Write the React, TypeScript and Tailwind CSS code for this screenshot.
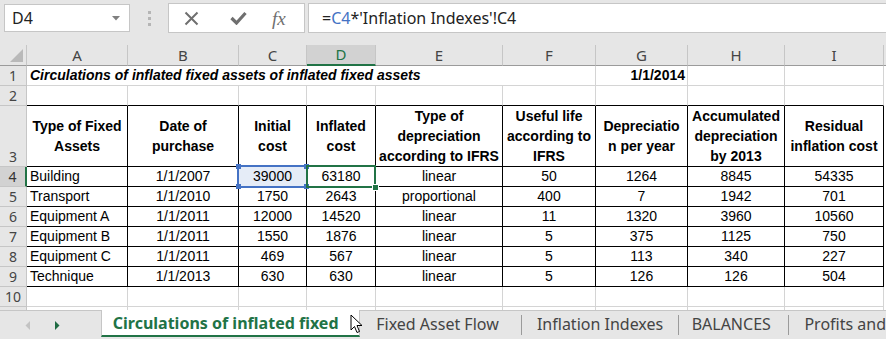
import React from 'react'

const cellFont = "font-['Liberation_Sans',Arial,sans-serif] text-[14px] text-black"
const uiFont = "font-['Noto_Sans','Open_Sans',sans-serif]"

const grid = 'border-r border-b border-[#d4d4d4] bg-white'
const boxed = 'border-r border-b border-black bg-white'
const aboveBox = 'border-r border-r-[#d4d4d4] border-b border-b-black bg-white'

const letters = ['A', 'B', 'C', 'D', 'E', 'F', 'G', 'H', 'I']

const headers: string[][] = [
  ['Type of Fixed', 'Assets'],
  ['Date of', 'purchase'],
  ['Initial', 'cost'],
  ['Inflated', 'cost'],
  ['Type of', 'depreciation', 'according to IFRS'],
  ['Useful life', 'according to', 'IFRS'],
  ['Depreciatio', 'n per year'],
  ['Accumulated', 'depreciation', 'by 2013'],
  ['Residual', 'inflation cost'],
]

const rows: string[][] = [
  ['Building', '1/1/2007', '39000', '63180', 'linear', '50', '1264', '8845', '54335'],
  ['Transport', '1/1/2010', '1750', '2643', 'proportional', '400', '7', '1942', '701'],
  ['Equipment A', '1/1/2011', '12000', '14520', 'linear', '11', '1320', '3960', '10560'],
  ['Equipment B', '1/1/2011', '1550', '1876', 'linear', '5', '375', '1125', '750'],
  ['Equipment C', '1/1/2011', '469', '567', 'linear', '5', '113', '340', '227'],
  ['Technique', '1/1/2013', '630', '630', 'linear', '5', '126', '126', '504'],
]

const RowHead = ({ n, active }: { n?: number; active?: boolean }) => (
  <div
    className={
      active
        ? `${uiFont} flex items-end justify-center bg-[#d2d2d2] border-b border-b-[#c6c6c6] border-r-2 border-r-[#217346] text-[14px] leading-[19px] text-[#333]`
        : `${uiFont} flex items-end justify-center bg-[#e6e6e6] border-b border-b-[#c6c6c6] border-r border-r-[#c6c6c6] text-[14px] leading-[19px] text-[#444]`
    }
  >
    {n}
  </div>
)

const FormulaBar = () => (
  <div className="h-[45px] flex items-start bg-[#e6e6e6]">
    <div className={`${uiFont} ml-[4px] mt-[4px] w-[126px] h-[28px] bg-white border border-[#c6c6c6] flex items-center justify-between pl-[7px] pr-[9px] text-[16px] text-[#222]`}>
      <span>D4</span>
      <svg width="8" height="5" viewBox="0 0 8 5">
        <path d="M0 0 L8 0 L4 4.5 Z" fill="#808080" />
      </svg>
    </div>
    <div className="w-[38px] h-[36px] flex flex-col items-center justify-center gap-[3px]">
      <span className="w-[3px] h-[3px] bg-[#b5b5b5]" />
      <span className="w-[3px] h-[3px] bg-[#b5b5b5]" />
      <span className="w-[3px] h-[3px] bg-[#b5b5b5]" />
    </div>
    <div className="mt-[3px] w-[137px] h-[30px] bg-white border border-[#c6c6c6] flex items-center">
      <svg className="ml-[15px]" width="15" height="15" viewBox="0 0 15 15">
        <path d="M1.5 1.5 L13.5 13.5 M13.5 1.5 L1.5 13.5" stroke="#6f6f6f" strokeWidth="2" />
      </svg>
      <svg className="ml-[31px]" width="17" height="14" viewBox="0 0 17 14">
        <path d="M1.5 7 L6.5 12 L15.5 2" stroke="#6f6f6f" strokeWidth="3.2" fill="none" />
      </svg>
      <span className="ml-[25px] font-['Liberation_Serif',serif] italic text-[19px] text-[#6f6f6f] leading-none">fx</span>
    </div>
    <div className={`${uiFont} ml-[3px] mt-[3px] flex-1 h-[30px] bg-white border border-r-0 border-[#c6c6c6] flex items-center pl-[13px] text-[16px] text-[#222] whitespace-nowrap`}>
      <span>=</span>
      <span className="text-[#4472c4]">C4</span>
      <span>*'Inflation Indexes'!C4</span>
    </div>
  </div>
)

const Sheet = () => (
  <div className="grid grid-cols-[27px_101px_111px_68px_69px_127px_93px_92px_97px_99px_1fr] grid-rows-[21px_20px_20px_61px_20px_20px_20px_20px_20px_20px_20px_3px]">
    {/* column headers */}
    <div className="bg-[#e6e6e6] border-r border-r-[#c6c6c6] border-b border-b-[#9b9b9b] relative">
      <svg className="absolute left-[10px] top-[4px]" width="14" height="14" viewBox="0 0 14 14">
        <path d="M13 0 L13 13 L0 13 Z" fill="#b9b9b9" />
      </svg>
    </div>
    {letters.map((l) =>
      l === 'D' ? (
        <div key={l} className={`${uiFont} flex items-center justify-center bg-[#d2d2d2] border-r border-r-[#c6c6c6] border-b-2 border-b-[#217346] text-[15px] text-[#217346]`}>
          {l}
        </div>
      ) : (
        <div key={l} className={`${uiFont} flex items-center justify-center bg-[#e6e6e6] border-r border-r-[#c6c6c6] border-b border-b-[#9b9b9b] text-[15px] text-[#444]`}>
          {l}
        </div>
      )
    )}
    <div className="bg-[#e6e6e6] border-b border-b-[#9b9b9b]" />

    {/* row 1 */}
    <RowHead n={1} />
    <div className={`${grid} col-span-6 flex items-center pl-[3px]`}>
      <span className={`${cellFont} font-bold italic text-[13px] whitespace-nowrap`}>
        Circulations of inflated fixed assets of inflated fixed assets
      </span>
    </div>
    <div className={`${grid} flex items-center justify-end pr-[2px]`}>
      <span className={`${cellFont} font-bold`}>1/1/2014</span>
    </div>
    <div className={grid} />
    <div className={grid} />
    <div className="bg-white" />

    {/* row 2 */}
    <RowHead n={2} />
    {letters.map((l) => (
      <div key={l} className={aboveBox} />
    ))}
    <div className="bg-white" />

    {/* row 3 headers */}
    <RowHead n={3} />
    {headers.map((lines, i) => (
      <div key={i} className={`${boxed} flex flex-col items-center justify-center overflow-hidden`}>
        {lines.map((t) => (
          <span key={t} className={`${cellFont} font-bold leading-[20px] whitespace-nowrap`}>
            {t}
          </span>
        ))}
      </div>
    ))}
    <div className="bg-white" />

    {/* data rows */}
    {rows.map((r, ri) => (
      <React.Fragment key={ri}>
        <RowHead n={ri + 4} active={ri === 0} />
        {r.map((v, ci) => {
          if (ri === 0 && ci === 2) {
            return (
              <div key={ci} className="border-r border-b border-black bg-[#e5ecf7] relative flex items-center justify-center">
                <span className={cellFont}>{v}</span>
                <div className="absolute inset-[-2px] border-2 border-[#4472c4] z-10">
                  <span className="absolute left-[-3px] top-[-3px] w-[5px] h-[5px] bg-[#4472c4]" />
                  <span className="absolute right-[-3px] top-[-3px] w-[5px] h-[5px] bg-[#4472c4]" />
                  <span className="absolute left-[-3px] bottom-[-3px] w-[5px] h-[5px] bg-[#4472c4]" />
                  <span className="absolute right-[-3px] bottom-[-3px] w-[5px] h-[5px] bg-[#4472c4]" />
                </div>
              </div>
            )
          }
          if (ri === 0 && ci === 3) {
            return (
              <div key={ci} className={`${boxed} relative flex items-center justify-center`}>
                <span className={cellFont}>{v}</span>
                <div className="absolute left-[-1px] top-[-2px] right-[-1px] bottom-[-2px] border-2 border-[#217346] z-20">
                  <span className="absolute right-[-5px] bottom-[-5px] w-[7px] h-[7px] bg-[#217346] border border-white" />
                </div>
              </div>
            )
          }
          return (
            <div
              key={ci}
              className={ci === 0 ? `${boxed} flex items-center pl-[3px] overflow-hidden` : `${boxed} flex items-center justify-center overflow-hidden`}
            >
              <span className={`${cellFont} whitespace-nowrap`}>{v}</span>
            </div>
          )
        })}
        <div className="bg-white" />
      </React.Fragment>
    ))}

    {/* row 10 */}
    <RowHead n={10} />
    {letters.map((l) => (
      <div key={l} className={grid} />
    ))}
    <div className="bg-white" />

    {/* row 11 partial */}
    <div className="bg-[#e6e6e6] border-r border-r-[#c6c6c6]" />
    {letters.map((l) => (
      <div key={l} className="bg-white border-r border-r-[#d4d4d4]" />
    ))}
    <div className="bg-white" />
  </div>
)

const TabBar = () => (
  <div className={`${uiFont} h-[29px] bg-[#e6e6e6] border-t border-t-[#c6c6c6] flex items-start relative`}>
    <div className="w-[101px] h-[28px] flex items-center">
      <svg className="ml-[25px]" width="6" height="9" viewBox="0 0 6 9">
        <path d="M5 0 L5 9 L0.5 4.5 Z" fill="#c3c3c3" />
      </svg>
      <svg className="ml-[23px]" width="6" height="9" viewBox="0 0 6 9">
        <path d="M1 0 L1 9 L5.5 4.5 Z" fill="#1f6b43" />
      </svg>
    </div>
    <div className="-mt-px w-[260px] h-[27px] bg-white border-l border-r border-[#c6c6c6] border-b-2 border-b-[#217346] flex items-center pl-[11px] text-[16px] font-bold text-[#217346] whitespace-nowrap">
      Circulations of inflated fixed
    </div>
    <div className="w-[161px] h-[25px] flex items-center pl-[16px] text-[16px] text-[#444] whitespace-nowrap">Fixed Asset Flow</div>
    <div className="w-px h-[20px] mt-[4px] bg-[#9b9b9b]" />
    <div className="w-[156px] h-[25px] flex items-center pl-[15px] text-[16px] text-[#444] whitespace-nowrap">Inflation Indexes</div>
    <div className="w-px h-[20px] mt-[4px] bg-[#9b9b9b]" />
    <div className="w-[110px] h-[25px] flex items-center pl-[13px] text-[16px] text-[#444] whitespace-nowrap">BALANCES</div>
    <div className="w-px h-[20px] mt-[4px] bg-[#9b9b9b]" />
    <div className="flex-1 h-[25px] flex items-center pl-[15px] text-[16px] text-[#444] whitespace-nowrap">Profits and</div>
    <svg className="absolute left-[350px] top-[3px]" width="13" height="20" viewBox="0 0 13 20">
      <path d="M1 1 L1 16 L4.5 12.5 L7 18.5 L9.5 17.5 L7 11.5 L12 11.5 Z" fill="white" stroke="black" strokeWidth="1" strokeLinejoin="round" />
    </svg>
  </div>
)

const App = () => {
  return (
    <div className="w-[886px] h-[339px] overflow-hidden bg-[#e6e6e6]">
      <FormulaBar />
      <Sheet />
      <TabBar />
    </div>
  )
}

export default App
